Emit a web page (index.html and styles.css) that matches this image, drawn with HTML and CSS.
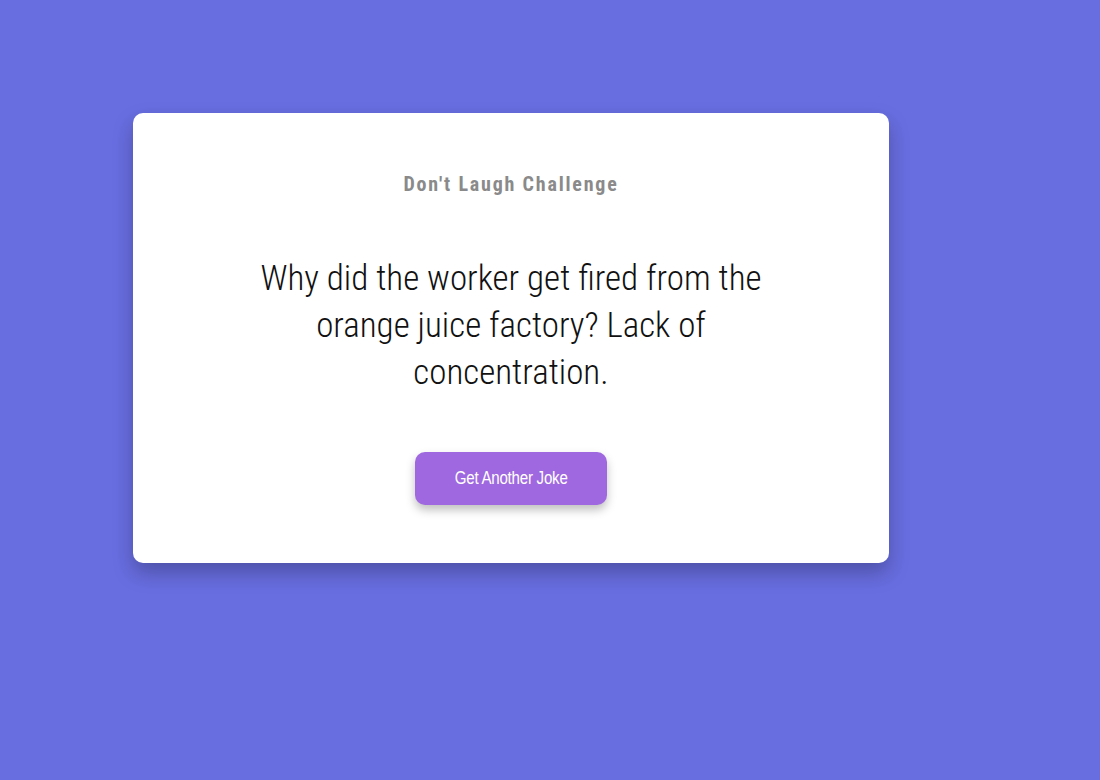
FILE: index.html
```html
<!DOCTYPE html>
<html>
<head>
<meta charset="utf-8">
<link rel="stylesheet" href="styles.css">
</head>
<body>
<div class="card">
  <h3 class="title">Don't Laugh Challenge</h3>
  <p class="joke">Why did the worker get fired from the orange juice factory? Lack of concentration.</p>
  <button class="btn"><span class="btn-label">Get Another Joke</span></button>
</div>
</body>
</html>
```
FILE: styles.css
```css
html, body {
  margin: 0;
  padding: 0;
}
body {
  background: #686de0;
  height: 780px;
  overflow: hidden;
  font-family: "Roboto Condensed", Roboto, sans-serif;
  font-stretch: condensed;
  padding-top: 113px;
  box-sizing: border-box;
}
.card {
  margin-left: 133px;
  width: 756px;
  height: 450px;
  box-sizing: border-box;
  background: #fff;
  border-radius: 10px;
  box-shadow: 0 10px 20px rgba(0, 0, 0, 0.25);
  padding: 59px 100px 0;
  display: flex;
  flex-direction: column;
  align-items: center;
  text-align: center;
}
.title {
  margin: 0;
  font-size: 20px;
  font-weight: 700;
  letter-spacing: 1.8px;
  color: #8a8a8a;
  line-height: 24px;
}
.joke {
  margin: 59px 0 0;
  font-size: 35px;
  font-weight: 300;
  line-height: 47px;
  color: #111;
  max-width: 520px;
}
.btn {
  margin-top: 56px;
  width: 192px;
  height: 53px;
  border: none;
  border-radius: 10px;
  background: #9f68e0;
  color: #fff;
  font-family: "Liberation Sans", Arial, sans-serif;
  font-size: 18px;
  box-shadow: 0 5px 10px rgba(0, 0, 0, 0.25);
  padding: 0;
}
.btn-label {
  display: inline-block;
  transform: scaleX(0.84);
  letter-spacing: -0.3px;
}
```
